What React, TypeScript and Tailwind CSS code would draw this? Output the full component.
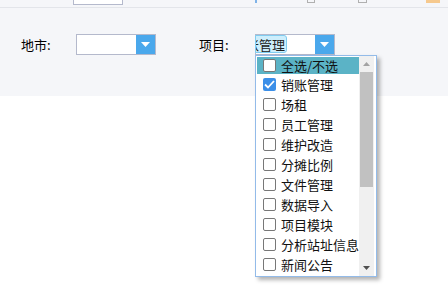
import { useState } from 'react';

const items = ['全选/不选', '销账管理', '场租', '员工管理', '维护改造', '分摊比例', '文件管理', '数据导入', '项目模块', '分析站址信息', '新闻公告'];

function Arrow() {
  return (
    <div className="w-[19px] h-full bg-[#4aa8ec] flex items-center justify-center">
      <svg width="9" height="5" viewBox="0 0 9 5"><path d="M0 0 L9 0 L4.5 5 Z" fill="#ffffff" /></svg>
    </div>
  );
}

export default function App() {
  const [checked, setChecked] = useState<string[]>(['销账管理']);

  const toggle = (name: string) => {
    setChecked(prev => (prev.includes(name) ? prev.filter(n => n !== name) : [...prev, name]));
  };

  return (
    <div className="w-[448px] h-[304px] bg-white relative overflow-hidden" style={{ fontFamily: '"Microsoft YaHei", "Noto Sans CJK SC", sans-serif' }}>
      {/* toolbar remnants */}
      <div className="h-[8px] bg-[#f5f6f9] border-b border-[#e3e5ea] relative">
        <div className="absolute left-[73px] top-[-4px] w-[50px] h-[9px] border border-[#b4b9cc] bg-white" />
        <div className="absolute left-[255px] top-0 w-[2px] h-[3px] bg-[#7fb3e8]" />
        <div className="absolute left-[307px] top-[-3px] w-[8px] h-[6px] border border-[#b0b0b0]" />
        <div className="absolute left-[358px] top-[-3px] w-[9px] h-[6px] border border-[#b0b0b0]" />
        <div className="absolute left-[426px] top-0 w-[14px] h-[3px] bg-[#f6c98e]" />
      </div>
      <div className="h-[88px] bg-[#f5f6f9] flex items-start pt-[26px]">
        <div className="flex items-center h-[21px]">
          <span className="ml-[21px] w-[55px] text-[13px] text-black leading-none">地市:</span>
          <div className="w-[80px] h-[21px] border border-[#b4b9cc] bg-white flex justify-end">
            <Arrow />
          </div>
          <span className="ml-[43px] w-[56px] text-[13px] text-black leading-none">项目:</span>
          <div className="w-[80px] h-[21px] border border-[#b4b9cc] bg-white flex justify-between relative">
            <div className="h-[18px] w-[32px] ml-[-1px] bg-[#cdeefc] border border-[#80ccf0] rounded-r-[3px] overflow-hidden flex items-center justify-end pr-[1px]">
              <span className="text-[13px] whitespace-nowrap text-[#222] leading-none">销账管理</span>
            </div>
            <Arrow />
          </div>
        </div>
      </div>

      {/* dropdown list */}
      <div className="absolute left-[255px] top-[55px] w-[122px] h-[222px] bg-white border border-[#93bbe9] shadow-[3px_3px_4px_rgba(0,0,0,0.3)] flex">
        <div className="flex-1 pt-[1px] pl-[1px]">
          {items.map((name, i) => {
            const on = checked.includes(name);
            return (
              <div
                key={name}
                onClick={() => toggle(name)}
                className={i === 0
                  ? 'h-[17px] flex items-center pl-[6px] text-[13px] leading-none cursor-pointer bg-[#5bb3c6]'
                  : 'h-[20px] flex items-center pl-[6px] text-[13px] leading-none cursor-pointer'}
              >
                {on ? (
                  <div className="w-[13px] h-[13px] rounded-[2px] bg-[#3b8fe8] flex items-center justify-center">
                    <svg width="11" height="9" viewBox="0 0 11 9"><path d="M1 4.5 L4 7.5 L10 1" stroke="#ffffff" strokeWidth="1.8" fill="none" /></svg>
                  </div>
                ) : (
                  <div className="w-[13px] h-[13px] rounded-[2px] border border-[#777] bg-white" />
                )}
                <span className="ml-[5px] text-[#111] whitespace-nowrap">{name}</span>
              </div>
            );
          })}
        </div>
        <div className="w-[15px] mr-[2px] bg-[#f0f0f0] flex flex-col items-center">
          <div className="h-[16px] flex items-center justify-center">
            <svg width="7" height="4" viewBox="0 0 7 4"><path d="M0 4 L7 4 L3.5 0 Z" fill="#a3a3a3" /></svg>
          </div>
          <div className="w-[13px] h-[115px] bg-[#c1c1c1]" />
          <div className="flex-1" />
          <div className="h-[16px] flex items-center justify-center">
            <svg width="7" height="4" viewBox="0 0 7 4"><path d="M0 0 L7 0 L3.5 4 Z" fill="#505050" /></svg>
          </div>
        </div>
      </div>
    </div>
  );
}
